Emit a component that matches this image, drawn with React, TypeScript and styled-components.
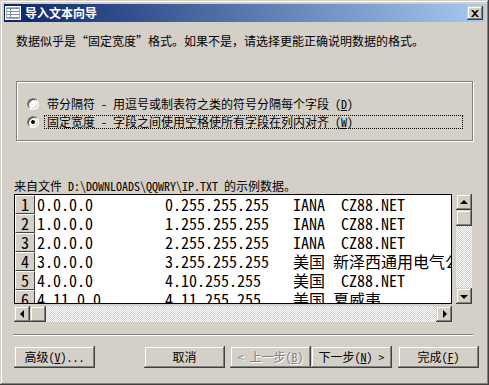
import styled, { createGlobalStyle } from "styled-components";

const uiFont = `"Noto Sans Mono CJK SC", "Noto Sans CJK SC", "Liberation Mono", monospace`;

const raised = `
  background: #d4d0c8;
  box-shadow: inset -1px -1px #404040, inset 1px 1px #d4d0c8, inset -2px -2px #808080, inset 2px 2px #fff;
`;

const GlobalStyle = createGlobalStyle`
  html, body { margin: 0; padding: 0; background: #d4d0c8; }
  body { font-family: ${uiFont}; font-size: 12px; color: #000; }
`;

const Window = styled.div`
  width: 489px;
  height: 385px;
  box-sizing: border-box;
  padding: 4px;
  background: #d4d0c8;
  box-shadow: inset -1px -1px #404040, inset 1px 1px #d4d0c8, inset -2px -2px #808080, inset 2px 2px #fff;
  display: flex;
  flex-direction: column;
`;

const TitleBar = styled.div`
  height: 18px;
  flex: none;
  display: flex;
  align-items: center;
  padding: 0 2px 0 1px;
  background: linear-gradient(to right, #0a246a, #a6caf0);
`;

const TitleText = styled.div`
  flex: 1;
  margin-left: 4px;
  color: #fff;
  font-family: "Noto Sans CJK SC", sans-serif;
  font-weight: bold;
  font-size: 12px;
  line-height: 18px;
`;

const CloseButton = styled.div`
  ${raised}
  width: 16px;
  height: 14px;
  display: flex;
  align-items: center;
  justify-content: center;
`;

const Body = styled.div`
  flex: 1;
  display: flex;
  flex-direction: column;
`;

const Instruction = styled.div`
  margin: 12px 0 0 12px;
  line-height: 14px;
  white-space: nowrap;
`;

const GroupBox = styled.div`
  margin: 33px 0 0 12px;
  width: 457px;
  height: 60px;
  box-sizing: border-box;
  border: 1px solid #808080;
  box-shadow: inset 1px 1px #fff, 1px 1px #fff;
  padding-top: 13px;
`;

const RadioRow = styled.div`
  display: flex;
  align-items: center;
  height: 18px;
  padding-left: 10px;
  gap: 5px;
`;

const RadioCircle = styled.span<{ $checked?: boolean }>`
  flex: none;
  width: 12px;
  height: 12px;
  box-sizing: border-box;
  border-radius: 50%;
  border: 1px solid;
  border-color: #808080 #fff #fff #808080;
  background: #fff;
  box-shadow: inset 1px 1px #404040, inset -1px -1px #d4d0c8;
  &::after {
    content: "";
    display: ${(p) => (p.$checked ? "block" : "none")};
    width: 4px;
    height: 4px;
    margin: 3px;
    border-radius: 50%;
    background: #000;
  }
`;

const RadioLabel = styled.span<{ $focused?: boolean }>`
  width: 419px;
  box-sizing: border-box;
  padding: 0 2px;
  line-height: 12px;
  white-space: nowrap;
  border: 1px dotted ${(p) => (p.$focused ? "#000" : "transparent")};
`;

const SourceLabel = styled.div`
  margin: 38px 0 0 10px;
  line-height: 14px;
  white-space: nowrap;
`;

const PreviewArea = styled.div`
  margin: 1px 0 0 10px;
  display: grid;
  grid-template-columns: 438px 16px;
  grid-template-rows: 110px 16px;
  column-gap: 4px;
  row-gap: 2px;
`;

const PreviewBox = styled.div`
  border: 1px solid #000;
  background: #fff;
  overflow: hidden;
  box-sizing: border-box;
`;

const DataRow = styled.div`
  display: flex;
  height: 19px;
  font-size: 16px;
  line-height: 19px;
  white-space: pre;
`;

const RowNumber = styled.div`
  flex: none;
  width: 20px;
  height: 19px;
  box-sizing: border-box;
  background: #d4d0c8;
  border: 1px solid;
  border-color: #fff #404040 #404040 #fff;
  text-align: center;
  line-height: 17px;
`;

const DataCell = styled.div<{ $width?: number }>`
  flex: ${(p) => (p.$width ? "none" : "1")};
  width: ${(p) => (p.$width ? `${p.$width}px` : "auto")};
  padding-left: ${(p) => (p.$width === 130 ? 2 : 0)}px;
  box-sizing: border-box;
`;

const ScrollBar = styled.div<{ $vertical?: boolean }>`
  display: flex;
  flex-direction: ${(p) => (p.$vertical ? "column" : "row")};
`;

const ScrollButton = styled.div`
  ${raised}
  flex: none;
  width: 16px;
  height: 16px;
  display: flex;
  align-items: center;
  justify-content: center;
`;

const Track = styled.div`
  flex: 1;
  background: repeating-conic-gradient(#d4d0c8 0 25%, #fff 0 50%) 0 0 / 2px 2px;
`;

const Arrow = styled.span<{ $dir: "up" | "down" | "left" | "right" }>`
  width: 0;
  height: 0;
  border-style: solid;
  border-color: transparent;
  ${(p) =>
    p.$dir === "up"
      ? "border-width: 0 4px 4px 4px; border-bottom-color: #000; margin-top: -1px;"
      : p.$dir === "down"
      ? "border-width: 4px 4px 0 4px; border-top-color: #000; margin-top: 1px;"
      : p.$dir === "left"
      ? "border-width: 4px 4px 4px 0; border-right-color: #000; margin-left: -1px;"
      : "border-width: 4px 0 4px 4px; border-left-color: #000; margin-left: 1px;"}
`;

const Separator = styled.div`
  margin: 12px 0 0 9px;
  width: 460px;
  border-top: 1px solid #808080;
  border-bottom: 1px solid #fff;
`;

const ButtonRow = styled.div`
  display: flex;
  margin: 10px 0 0 10px;
`;

const Button = styled.div<{ $offset?: number; $disabled?: boolean }>`
  ${raised}
  width: 81px;
  height: 22px;
  margin-left: ${(p) => p.$offset ?? 0}px;
  display: flex;
  align-items: center;
  justify-content: center;
  line-height: 14px;
  white-space: pre;
  color: ${(p) => (p.$disabled ? "#808080" : "#000")};
  text-shadow: ${(p) => (p.$disabled ? "1px 1px 0 #fff" : "none")};
`;

const rows = [
  ["0.0.0.0", "0.255.255.255", "IANA  CZ88.NET"],
  ["1.0.0.0", "1.255.255.255", "IANA  CZ88.NET"],
  ["2.0.0.0", "2.255.255.255", "IANA  CZ88.NET"],
  ["3.0.0.0", "3.255.255.255", "美国 新泽西通用电气公司"],
  ["4.0.0.0", "4.10.255.255", "美国  CZ88.NET"],
  ["4.11.0.0", "4.11.255.255", "美国 夏威夷"],
];

const TitleIcon = () => (
  <svg width="16" height="14" viewBox="0 0 16 14">
    <rect x="0.5" y="0.5" width="15" height="13" fill="#d4d0c8" stroke="#fff" />
    <rect x="1.5" y="1.5" width="13" height="11" fill="#7f8aa8" />
    <rect x="2" y="3" width="3" height="2" fill="#fff" />
    <rect x="2" y="6" width="3" height="2" fill="#fff" />
    <rect x="2" y="9" width="3" height="2" fill="#fff" />
    <rect x="6" y="3" width="8" height="2" fill="#fff" />
    <rect x="6" y="6" width="8" height="2" fill="#fff" />
    <rect x="6" y="9" width="8" height="2" fill="#fff" />
  </svg>
);

export default function App() {
  return (
    <>
      <GlobalStyle />
      <Window>
        <TitleBar>
          <TitleIcon />
          <TitleText>导入文本向导</TitleText>
          <CloseButton>
            <svg width="8" height="7" viewBox="0 0 8 7">
              <path d="M0 0h2l2 2 2-2h2L5 3.5 8 7H6L4 5 2 7H0l3-3.5z" fill="#000" />
            </svg>
          </CloseButton>
        </TitleBar>
        <Body>
          <Instruction>数据似乎是“固定宽度”格式。如果不是，请选择更能正确说明数据的格式。</Instruction>
          <GroupBox>
            <RadioRow>
              <RadioCircle />
              <RadioLabel>
                带分隔符 - 用逗号或制表符之类的符号分隔每个字段 (<u>D</u>)
              </RadioLabel>
            </RadioRow>
            <RadioRow>
              <RadioCircle $checked />
              <RadioLabel $focused>
                固定宽度 - 字段之间使用空格使所有字段在列内对齐 (<u>W</u>)
              </RadioLabel>
            </RadioRow>
          </GroupBox>
          <SourceLabel>来自文件 D:\DOWNLOADS\QQWRY\IP.TXT 的示例数据。</SourceLabel>
          <PreviewArea>
            <PreviewBox>
              {rows.map((r, i) => (
                <DataRow key={i}>
                  <RowNumber>{i + 1}</RowNumber>
                  <DataCell $width={130}>{r[0]}</DataCell>
                  <DataCell $width={128}>{r[1]}</DataCell>
                  <DataCell>{r[2]}</DataCell>
                </DataRow>
              ))}
            </PreviewBox>
            <ScrollBar $vertical>
              <ScrollButton>
                <Arrow $dir="up" />
              </ScrollButton>
              <ScrollButton />
              <Track />
              <ScrollButton>
                <Arrow $dir="down" />
              </ScrollButton>
            </ScrollBar>
            <ScrollBar>
              <ScrollButton>
                <Arrow $dir="left" />
              </ScrollButton>
              <ScrollButton />
              <Track />
              <ScrollButton>
                <Arrow $dir="right" />
              </ScrollButton>
            </ScrollBar>
          </PreviewArea>
          <Separator />
          <ButtonRow>
            <Button>
              高级(<u>V</u>)...
            </Button>
            <Button $offset={49}>取消</Button>
            <Button $offset={5} $disabled>
              {"< 上一步("}
              <u>B</u>)
            </Button>
            <Button>
              下一步(<u>N</u>){" >"}
            </Button>
            <Button $offset={6}>
              完成(<u>F</u>)
            </Button>
          </ButtonRow>
        </Body>
      </Window>
    </>
  );
}
